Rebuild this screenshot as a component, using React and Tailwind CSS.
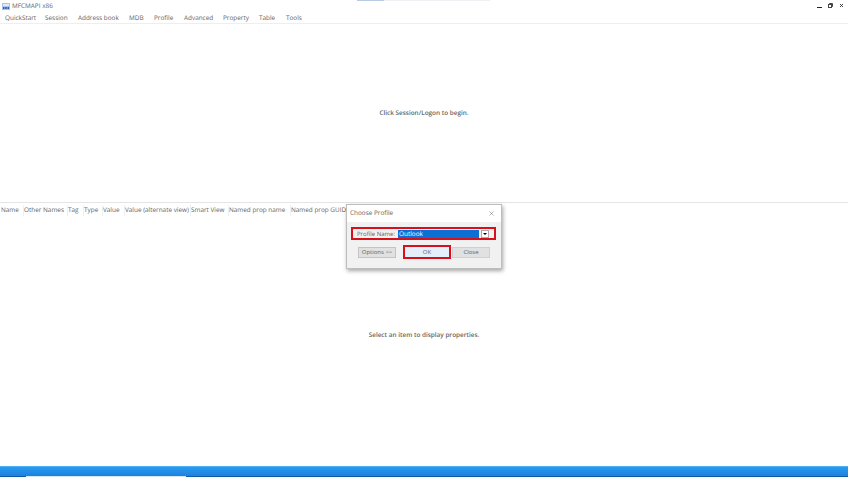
import { X } from 'lucide-react';

const menus = [
  ['QuickStart', 'w-[40px]'],
  ['Session', 'w-[33px]'],
  ['Address book', 'w-[51px]'],
  ['MDB', 'w-[25px]'],
  ['Profile', 'w-[30px]'],
  ['Advanced', 'w-[39px]'],
  ['Property', 'w-[36px]'],
  ['Table', 'w-[27px]'],
  ['Tools', 'w-[20px]'],
];

const columns = [
  ['Name', 'w-[23px]'],
  ['Other Names', 'w-[44px]'],
  ['Tag', 'w-[16px]'],
  ['Type', 'w-[19px]'],
  ['Value', 'w-[22px]'],
  ['Value (alternate view)', 'w-[66px]'],
  ['Smart View', 'w-[38px]'],
  ['Named prop name', 'w-[62px]'],
  ['Named prop GUID', 'w-[56px]'],
];

const App = () => {
  return (
    <div className="relative w-[848px] h-[477px] overflow-hidden bg-white flex flex-col font-['Open_Sans',sans-serif] text-[#5f5f5f] antialiased [text-rendering:geometricPrecision]">
      <div className="absolute left-[357px] top-0 w-[133px] h-px bg-[#eef0f3]">
        <div className="w-[27px] h-px bg-[#b9cbe2]" />
      </div>

      <div className="h-[12px] flex items-center justify-between pl-[2px] pr-[4px]">
        <div className="flex items-center gap-[2px]">
          <svg width="8" height="7" viewBox="0 0 8 7">
            <rect width="8" height="7" fill="#a9c6ea" />
            <rect x="1" y="1" width="6" height="2" fill="#dfeafa" />
            <rect x="1" y="4" width="1.5" height="2" fill="#2f5da8" />
            <rect x="3.2" y="4" width="1.5" height="2" fill="#2f5da8" />
            <rect x="5.5" y="4" width="1.5" height="2" fill="#2f5da8" />
          </svg>
          <span className="text-[6.4px] leading-none">MFCMAPI x86</span>
        </div>
        <div className="flex items-center gap-[6px] -mt-[2px]">
          <div className="w-[5px] h-px mt-[4px] bg-[#222]" />
          <svg width="5" height="5" viewBox="0 0 5 5" fill="none" stroke="#444" strokeWidth="1">
            <path d="M1.5 1V.5h3v3H4" />
            <rect x="0.5" y="1.5" width="3" height="3" />
          </svg>
          <X className="w-[5px] h-[5px] text-[#222]" strokeWidth={4} />
        </div>
      </div>

      <div className="h-[12px] flex items-center pl-[5px] pt-px border-b border-[#eeeeee]">
        {menus.map(([label, width]) => (
          <span key={label} className={`${width} text-[6.4px] leading-none whitespace-nowrap`}>{label}</span>
        ))}
      </div>

      <div className="h-[179px] flex items-center justify-center border-b border-[#e4e4e4]">
        <span className="text-[6.4px] font-semibold text-[#666]">Click Session/Logon to begin.</span>
      </div>

      <div className="flex-1 flex flex-col">
        <div className="h-[15px] flex items-center pl-px">
          {columns.map(([label, width]) => (
            <span key={label} className={`${width} h-[11px] flex items-center border-r border-[#f0f0f0] text-[6.4px] leading-none whitespace-nowrap`}>{label}</span>
          ))}
        </div>
        <div className="flex-1 flex items-center justify-center pb-[14px]">
          <span className="text-[6.4px] font-semibold text-[#666]">Select an item to display properties.</span>
        </div>
      </div>

      <div className="h-[11px] flex flex-col bg-gradient-to-b from-[#2a9af0] to-[#1a80dc] border-t border-[#4db2f5]">
        <div className="flex-1" />
        <div className="h-[1px] flex bg-[#0f5aa5]">
          <div className="ml-[26px] w-[160px] bg-[#cfe6fb]" />
        </div>
      </div>

      <div className="absolute left-[346px] top-[204px] w-[156px] h-[65px] bg-[#f1f1f1] border border-[#bdbdbd] shadow-[1px_2px_4px_rgba(0,0,0,0.35)] flex flex-col">
        <div className="h-[17px] bg-white flex items-center justify-between pl-[3px] pr-[6px]">
          <span className="text-[6.4px] leading-none">Choose Profile</span>
          <X className="w-[7px] h-[7px] text-[#555]" strokeWidth={1.5} />
        </div>
        <div className="mt-[5px] ml-[4px] w-[145px] h-[13px] border-2 border-[#d8101c] flex items-center pl-[4px] pr-[5px]">
          <span className="w-[41px] text-[6px] leading-none whitespace-nowrap">Profile Name:</span>
          <div className="flex-1 h-[8px] flex items-center gap-[2px]">
            <div className="flex-1 h-full bg-[#0b6fd6] flex items-center pl-px pt-px">
              <span className="text-[6.4px] leading-none text-white">Outlook</span>
            </div>
            <div className="w-[8px] h-full bg-white border border-[#aaa] flex items-center justify-center">
              <div className="w-0 h-0 border-x-[2px] border-x-transparent border-t-[2px] border-t-black" />
            </div>
          </div>
        </div>
        <div className="mt-[5px] flex items-center pl-[11px]">
          <button className="w-[38px] h-[11px] bg-[#e1e1e1] border border-[#c4c4c4] text-[6px] leading-none">Options &gt;&gt;</button>
          <div className="ml-[7px] w-[48px] h-[14px] border-2 border-[#d8101c] flex items-center justify-center">
            <button className="w-full h-full bg-[#e3f0fb] text-[6px] leading-none">OK</button>
          </div>
          <button className="ml-[1px] w-[38px] h-[11px] bg-[#e1e1e1] border border-[#d0d0d0] text-[6px] leading-none">Close</button>
        </div>
      </div>
    </div>
  );
};

export default App;
